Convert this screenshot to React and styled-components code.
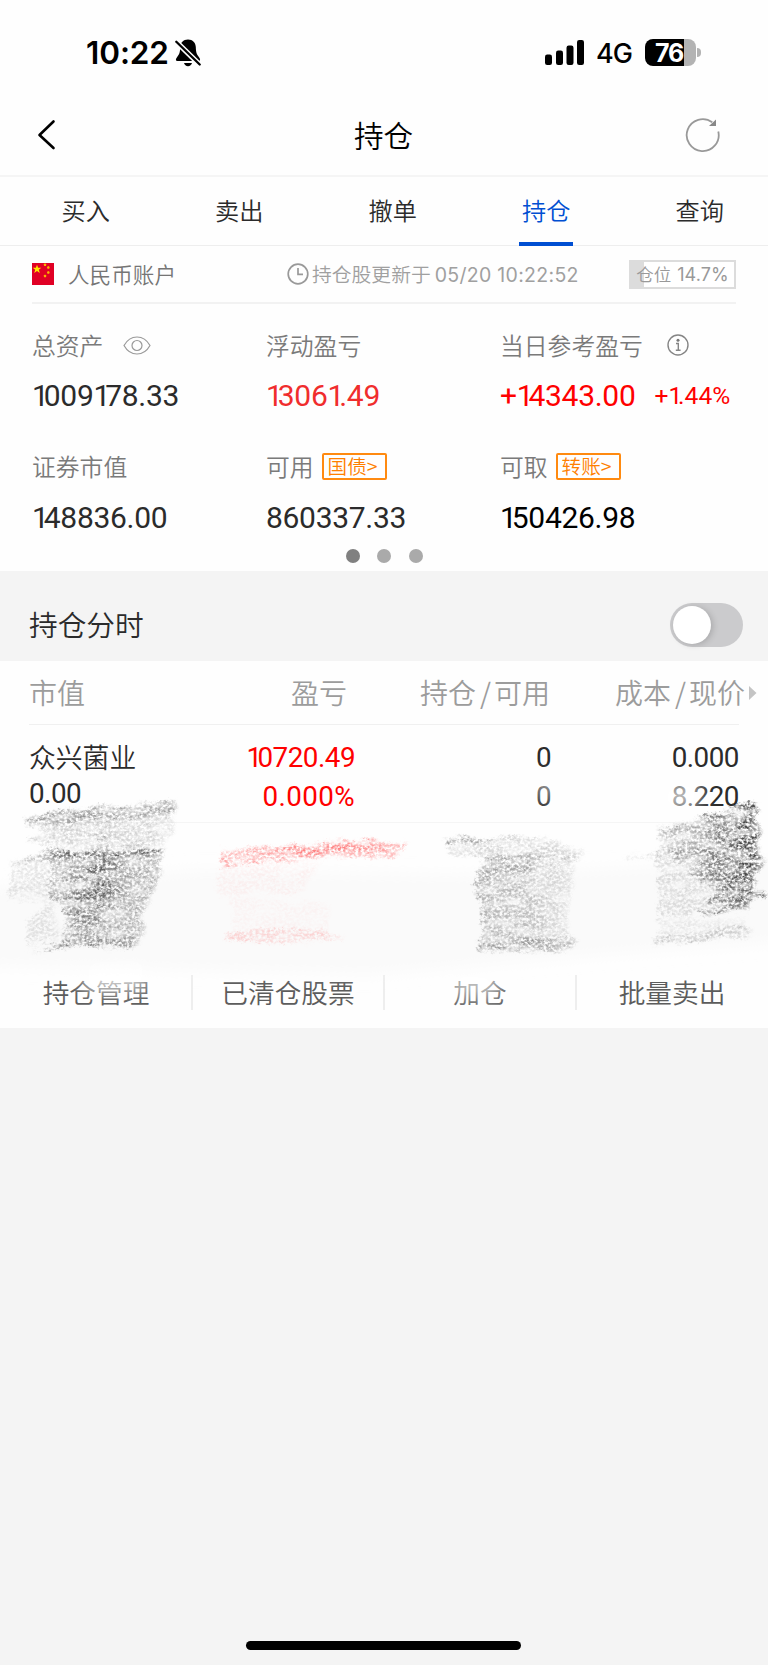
import React from "react";
import styled, { createGlobalStyle } from "styled-components";

const Global = createGlobalStyle`
  * { box-sizing: border-box; }
  body { margin: 0; background: #f4f4f4; }
`;

const cjk = `"Noto Sans CJK SC", sans-serif`;

const Screen = styled.div`
  width: 768px;
  height: 1665px;
  display: flex;
  flex-direction: column;
  background: #f4f4f4;
  font-family: ${cjk};
  font-weight: 350;
  color: #2b2b2b;
  overflow: hidden;
  white-space: nowrap;
`;

const StatusBar = styled.header`
  height: 96px;
  padding: 9px 67px 0 86px;
  display: flex;
  align-items: center;
  justify-content: space-between;
  background: #fefefe;
  font-family: Inter, sans-serif;
  color: #000;
`;
const StatusGroup = styled.div`
  display: flex;
  align-items: center;
`;
const Clock = styled.span`
  font-size: 31.5px;
  font-weight: 600;
  line-height: 36px;
  letter-spacing: -0.1px;
  margin-right: 6px;
`;
const Network = styled.span`
  font-size: 27px;
  font-weight: 500;
  line-height: 36px;
  letter-spacing: -1px;
  margin: 2px 13px 0 12px;
`;
const Battery = styled.div`
  width: 51px;
  height: 27px;
  border-radius: 8px;
  background: linear-gradient(90deg, #000 39px, #b3b3b3 39px);
  color: #fff;
  font-size: 25px;
  font-weight: 700;
  line-height: 28px;
  letter-spacing: -1.2px;
  padding-left: 10px;
`;
const BatteryTip = styled.i`
  width: 4px;
  height: 9px;
  margin-left: 1px;
  border-radius: 0 4px 4px 0;
  background: #b3b3b3;
`;

const NavBar = styled.nav`
  height: 81px;
  padding: 0 46px 2px 36px;
  display: grid;
  grid-template-columns: 38px 1fr 38px;
  align-items: center;
  background: #fefefe;
  border-bottom: 2px solid #f5f5f5;
`;
const Title = styled.h1`
  margin: 0 0 0 9px;
  text-align: center;
  font-size: 29.6px;
  font-weight: 350;
  line-height: 40px;
  color: #000;
`;

const Tabs = styled.div`
  height: 69px;
  padding-left: 9px;
  display: grid;
  grid-template-columns: repeat(5, 153.5px);
  justify-items: center;
  background: #fefefe;
  border-bottom: 1px solid #eee;
`;
const Tab = styled.div`
  width: 54px;
  height: 69px;
  display: flex;
  justify-content: center;
  font-size: 24.2px;
  line-height: 66px;
  color: ${(p) => (p.$active ? "#004fd2" : "#2b2b2b")};
  border-bottom: 4px solid ${(p) => (p.$active ? "#004fd2" : "transparent")};
`;

const Summary = styled.section`
  height: 325px;
  padding: 0 32px;
  background: #fefefe;
`;
const AccountRow = styled.div`
  height: 58px;
  display: flex;
  align-items: center;
  border-bottom: 2px solid #f2f2f2;
`;
const AccountName = styled.span`
  width: 233px;
  padding: 0 0 2px 14px;
  font-size: 21.6px;
  color: #757575;
`;
const Updated = styled.span`
  width: 320px;
  padding: 0 0 2px 3px;
  font-size: 19.8px;
  color: #a0a0a0;
`;
const Stamp = styled.span`
  margin-left: 4px;
  font-family: Inter, sans-serif;
  font-size: 19.5px;
  font-weight: 400;
  letter-spacing: 0.3px;
`;
const Ratio = styled.span`
  width: 107px;
  height: 29px;
  border: 2px solid #dcdcdc;
  background: linear-gradient(90deg, #dcdcdc 13px, #fff 13px);
  font-size: 17.5px;
  line-height: 24px;
  text-align: center;
  color: #999;
  em {
    font: 400 18px/24px Inter, sans-serif;
    letter-spacing: 0.1px;
    margin-left: 6px;
  }
`;

const Metrics = styled.div`
  display: grid;
  grid-template-columns: 234px 234px 1fr;
  grid-template-rows: 122px 110px;
`;
const Metric = styled.div`
  padding-top: ${(p) => (p.$second ? 19 : 20)}px;
`;
const MetricLabel = styled.div`
  height: 40px;
  display: flex;
  align-items: center;
  font-size: 23.8px;
  color: #7a7a7a;
  svg { margin: 2px 0 0 ${(p) => p.$gap || 0}px; }
`;
const MetricValue = styled.div`
  height: 40px;
  margin-top: ${(p) => (p.$second ? 12 : 11)}px;
  display: flex;
  align-items: center;
  font-family: Roboto, sans-serif;
  font-weight: 400;
  font-size: 30px;
  letter-spacing: -0.3px;
  color: ${(p) => p.$color || "#2b2b2b"};
`;
const Percent = styled.span`
  margin-left: 19px;
  font-size: 24.6px;
  letter-spacing: 0;
`;
const One = styled.span`
  letter-spacing: -0.17em;
`;
const Tag = styled.span`
  height: 27px;
  width: 65px;
  margin: 2px 0 0 8px;
  padding-left: 4px;
  border: 2px solid #ff8a10;
  border-radius: 2px;
  font-size: 19.6px;
  line-height: 21px;
  color: #ff7f00;
`;
const Dots = styled.div`
  display: flex;
  justify-content: center;
  gap: 17.5px;
  height: 14px;
  margin-top: 13px;
`;
const Dot = styled.i`
  width: 14px;
  height: 14px;
  border-radius: 50%;
  background: ${(p) => (p.$active ? "#808080" : "#aaa")};
`;

const ToggleRow = styled.section`
  height: 90px;
  padding: 18px 25px 0 29px;
  display: flex;
  align-items: center;
  justify-content: space-between;
  font-size: 28.7px;
`;
const ToggleLabel = styled.span`
  padding-bottom: 4px;
`;
const Switch = styled.div`
  width: 73px;
  height: 44px;
  padding: 3px;
  border-radius: 22px;
  background: #cbcbcd;
`;
const Knob = styled.div`
  width: 38px;
  height: 38px;
  border-radius: 50%;
  background: #fff;
  box-shadow: 2px 1px 6px rgba(0, 0, 0, 0.17);
`;

const Holdings = styled.section`
  position: relative;
  height: 367px;
  display: flex;
  flex-direction: column;
  background: #fefefe;
`;
const HeadRow = styled.div`
  height: 64px;
  margin: 0 29px;
  display: grid;
  grid-template-columns: 120px 198px 203px 195px;
  line-height: 60px;
  font-size: 28px;
  color: #9c9c9c;
  border-bottom: 1px solid #f0f0f0;
`;
const HeadCell = styled.div`
  position: relative;
  padding-bottom: 2px;
  display: flex;
  align-items: center;
  justify-content: ${(p) => (p.$left ? "flex-start" : "flex-end")};
  i { font-style: normal; margin: 0 3px 0 4px; }
`;
const More = styled.svg`
  position: absolute;
  right: -12px;
  top: 25px;
`;
const StockRow = styled.div`
  height: 98px;
  margin: 0 29px;
  padding-top: 14px;
  display: grid;
  grid-template-columns: 120px 206px 196px 188px;
  border-bottom: 1px solid #f5f5f5;
`;
const Cell = styled.div`
  display: flex;
  flex-direction: column;
  align-items: ${(p) => (p.$left ? "flex-start" : "flex-end")};
  gap: ${(p) => (p.$left ? 0 : 2)}px;
  font-family: Roboto, sans-serif;
  font-weight: 400;
  font-size: 27.8px;
  letter-spacing: -0.5px;
  line-height: 37px;
  color: ${(p) => p.$color || "#2b2b2b"};
`;
const StockName = styled.span`
  height: 36px;
  font-family: ${cjk};
  font-weight: 350;
  font-size: 26.8px;
  letter-spacing: 0;
  line-height: 35px;
`;
const Wide = styled.span`
  letter-spacing: 0.4px;
`;
const Actions = styled.div`
  height: 53px;
  margin-top: auto;
  padding-left: 1px;
  display: grid;
  grid-template-columns: repeat(4, 192px);
`;
const Action = styled.div`
  height: 35px;
  border-right: 2px solid ${(p) => (p.$last ? "transparent" : "#eee")};
  text-align: center;
  line-height: 33px;
  font-size: 26.7px;
  color: #5c5c5c;
`;
const Smudges = styled.svg`
  position: absolute;
  left: 0;
  top: 0;
  pointer-events: none;
`;
const HomeIndicator = styled.div`
  width: 275px;
  height: 9px;
  margin: auto auto 15px 246px;
  border-radius: 5px;
  background: #000;
`;

const Num = ({ children }) => (
  <span>
    {children.split(/(1)/).filter(Boolean).map((part, i) =>
      part === "1" ? <One key={i}>1</One> : part
    )}
  </span>
);

const BellOff = () => (
  <svg width="26" height="28" viewBox="0 0 26 28">
    <path d="M13 .5c-4.800 0-7.600 3.300-7.800 7.600C5 13.500 4.500 15 2 18.200.3 20.300.6 22 2.500 22h21c1.900 0 2.200-1.700.5-3.800-2.500-3.200-3-4.700-3.200-10.100C20.600 3.800 17.800.5 13 .5z" fill="#000" />
    <path d="M9 24h8c-.5 2-2 3.200-4 3.200S9.500 26 9 24z" fill="#000" />
    <path d="M0 1.500L26 27" stroke="#fefefe" strokeWidth="5.200" />
    <path d="M1.300 2.700L24.700 25.500" stroke="#000" strokeWidth="2.300" strokeLinecap="round" />
  </svg>
);

const Signal = () => (
  <svg width="39" height="26" viewBox="0 0 39 26">
    <rect x="0" y="14.500" width="7" height="10.500" rx="2.200" />
    <rect x="11" y="10.500" width="7" height="14.500" rx="2.200" />
    <rect x="21.500" y="5.500" width="7" height="19.500" rx="2.200" />
    <rect x="32" y="0" width="7" height="25" rx="2.200" />
  </svg>
);

const RefreshSvg = styled.svg`
  display: block;
`;
const Refresh = () => (
  <RefreshSvg width="38" height="38" viewBox="0 0 38 38" fill="none">
    <path d="M34.300 15.500A16 16 0 1 1 28.300 6.300" stroke="#999" strokeWidth="1.800" />
    <path d="M32 3.500V10H25z" fill="#888" />
  </RefreshSvg>
);

const Flag = () => (
  <svg width="22" height="22" viewBox="0 0 22 22">
    <rect width="22" height="22" fill="#e00024" />
    <path d="M5 1.800l1.100 3h3.200L6.800 6.700l1 3.200L5 8 2.200 9.900l1-3.200L.7 4.800h3.200z" fill="#ffe600" />
    <g fill="#f9b500">
      <path d="M13 .2l1.400 1-.5 1.700h-1.700l-.6-1.700z" />
      <path d="M16.300 3l1.400 1-.5 1.700h-1.700l-.6-1.700z" />
      <path d="M16.300 8l1.400 1-.5 1.700h-1.700l-.6-1.700z" />
      <path d="M13 11.500l1.400 1-.5 1.700h-1.700l-.6-1.700z" />
    </g>
  </svg>
);

const ClockIcon = () => (
  <svg width="22" height="22" viewBox="0 0 22 22" fill="none" stroke="#999" strokeWidth="1.700">
    <circle cx="11" cy="11" r="9.800" />
    <path d="M11 5v6.300h5" />
  </svg>
);

const Eye = () => (
  <svg width="28" height="19" viewBox="0 0 28 19" fill="none" stroke="#999" strokeWidth="1.200">
    <path d="M1 9.500C4.200 3.800 8.800 1 14 1s9.800 2.800 13 8.500C23.800 15.200 19.200 18 14 18S4.200 15.200 1 9.500z" />
    <circle cx="14" cy="9.500" r="5" />
  </svg>
);

const Info = () => (
  <svg width="22" height="22" viewBox="0 0 22 22" fill="none" stroke="#858585" strokeWidth="1.400">
    <circle cx="11" cy="11" r="10" />
    <circle cx="11" cy="6.300" r="1.500" fill="#777" stroke="none" />
    <path d="M9 9.500h2.300v6.500M8.800 16.200h4.800" />
  </svg>
);

const Scribbles = () => (
  <Smudges width="768" height="367" viewBox="0 661 768 367">
    <defs>
      <filter id="grain" filterUnits="userSpaceOnUse" x="0" y="740" width="768" height="260" colorInterpolationFilters="sRGB">
        <feTurbulence type="fractalNoise" baseFrequency="0.34 0.38" numOctaves="2" seed="11" result="n" />
        <feColorMatrix in="n" type="matrix" values="0 0 0 0 0  0 0 0 0 0  0 0 0 0 0  2.700 0 0 0 -0.820" result="dots" />
        <feTurbulence type="fractalNoise" baseFrequency="0.04 0.11" numOctaves="3" seed="4" result="n2" />
        <feColorMatrix in="n2" type="matrix" values="0 0 0 0 0  0 0 0 0 0  0 0 0 0 0  2 0 0 0 -0.200" result="patches" />
        <feGaussianBlur in="SourceGraphic" stdDeviation="1.800" result="soft" />
        <feDisplacementMap in="soft" in2="n2" scale="11" xChannelSelector="R" yChannelSelector="B" result="wavy" />
        <feDisplacementMap in="wavy" in2="n" scale="6" xChannelSelector="R" yChannelSelector="G" result="rough" />
        <feComposite in="rough" in2="dots" operator="in" result="speckled" />
        <feComposite in="speckled" in2="patches" operator="in" />
      </filter>
      <filter id="haze" filterUnits="userSpaceOnUse" x="-40" y="740" width="848" height="288">
        <feGaussianBlur stdDeviation="8" />
      </filter>
      <radialGradient id="core" gradientUnits="userSpaceOnUse" cx="0" cy="0" r="1" gradientTransform="translate(98 884) rotate(14) scale(36 66)">
        <stop offset="0" stopColor="#3c3c3c" stopOpacity=".9" />
        <stop offset="0.500" stopColor="#444" stopOpacity=".45" />
        <stop offset="1" stopColor="#444" stopOpacity="0" />
      </radialGradient>
      <linearGradient id="fadeLeft" gradientUnits="userSpaceOnUse" x1="655" y1="0" x2="745" y2="0">
        <stop offset="0" stopColor="#404040" stopOpacity=".22" />
        <stop offset="0.550" stopColor="#404040" stopOpacity=".45" />
        <stop offset="1" stopColor="#404040" stopOpacity=".95" />
      </linearGradient>
      <linearGradient id="fadeRight" gradientUnits="userSpaceOnUse" x1="447" y1="0" x2="550" y2="0">
        <stop offset="0" stopColor="#555" stopOpacity=".85" />
        <stop offset="1" stopColor="#555" stopOpacity=".1" />
      </linearGradient>
      <linearGradient id="block" gradientUnits="userSpaceOnUse" x1="478" y1="0" x2="576" y2="0">
        <stop offset="0" stopColor="#555" stopOpacity=".42" />
        <stop offset="0.500" stopColor="#555" stopOpacity=".38" />
        <stop offset="1" stopColor="#555" stopOpacity=".14" />
      </linearGradient>
    </defs>
    <g filter="url(#haze)">
      <path d="M-40 890L200 870 450 875 808 860V940L600 955 370 975 -40 965z" fill="#f6f6f6" opacity=".4" />
      <path d="M84 980L146 978" stroke="#fff" strokeWidth="26" opacity=".7" />
      <path d="M450 984L500 986" stroke="#fff" strokeWidth="28" opacity=".6" />
      <path d="M536 786L555 790" stroke="#fff" strokeWidth="24" opacity=".6" />
      <path d="M662 800L700 792" stroke="#fff" strokeWidth="26" opacity=".7" />
    </g>
    <g filter="url(#grain)">
      <g fill="#444">
        <path d="M24 819L46 817 50 812 175 801 177 812 125 818 50 823 26 825z" opacity=".5" />
        <path d="M44 820L172 812 174 832 160 846 100 850 30 842z" opacity=".24" />
        <path d="M10 864L50 850 162 848 164 856 60 860z" opacity=".4" />
        <path d="M52 850L163 849 160 878 142 915 146 930 136 944 62 944 64 910 50 898z" opacity=".42" />
        <path d="M60 851L162 849 162 855 62 857z" opacity=".5" />
        <path d="M52 850L164 850 150 948 60 948z" fill="url(#core)" />
        <path d="M12 868L56 860 54 915 62 940 28 945 28 920 46 905 10 895z" opacity=".14" />
        <path d="M28 952L70 941 138 942 130 948 70 946z" opacity=".55" />
        <path d="M94 838L106 835 106 840 97 843z" opacity=".8" />
      </g>
      <g fill="#ff3030">
        <path d="M222 849L260 849 374 839 378 843 406 842 406 850 392 855 290 860 224 868z" opacity=".42" />
        <path d="M265 849L376 840 388 848 290 856z" opacity=".32" />
        <path d="M218 870L320 862 300 895 216 895z" opacity=".06" />
        <path d="M225 936L260 930 320 930 345 938 290 943 228 941z" opacity=".2" />
        <path d="M230 895L330 905 330 935 235 932z" opacity=".04" />
      </g>
      <path d="M447 839L548 837 548 841 448 844z" fill="url(#fadeRight)" />
      <g fill="#505050">
        <path d="M447 845L560 843 584 852 580 860 480 856 450 855z" opacity=".24" />
        <path d="M483 857L574 855 574 880 566 920 574 945 480 948 484 910 474 885z" fill="url(#block)" />
        <path d="M484 858L530 854 534 874 486 876z" opacity=".2" />
        <path d="M478 944L520 942 524 939 577 939 574 945 552 952 480 950z" opacity=".45" />
      </g>
      <path d="M657 832L690 822 754 803 760 808 754 818 762 832 756 846 764 862 756 874 752 902 700 914 716 890 700 880 660 850z" fill="url(#fadeLeft)" />
      <g fill="#404040">
        <path d="M657 830L754 803 758 808 660 834z" opacity=".3" />
        <path d="M657 850L720 848 722 895 690 918 660 915z" opacity=".17" />
        <path d="M700 910L752 904 753 907 702 914z" opacity=".6" />
        <path d="M625 857L700 848 740 850 630 860z" opacity=".16" />
        <path d="M746 891L768 892 768 899 748 898z" opacity=".75" />
        <path d="M652 940L745 925 752 934 655 944z" opacity=".28" />
        <path d="M658 920L745 918 742 930 660 940z" opacity=".1" />
      </g>
    </g>
  </Smudges>
);

const tabs = ["买入", "卖出", "撤单", "持仓", "查询"];

export default function App() {
  return (
    <Screen>
      <Global />
      <StatusBar>
        <StatusGroup>
          <Clock>10:22</Clock>
          <BellOff />
        </StatusGroup>
        <StatusGroup>
          <Signal />
          <Network>4G</Network>
          <Battery>76</Battery>
          <BatteryTip />
        </StatusGroup>
      </StatusBar>
      <NavBar>
        <svg width="22" height="32" viewBox="0 0 22 32" fill="none" stroke="#000" strokeWidth="2.600" strokeLinecap="round" strokeLinejoin="round">
          <path d="M17.500 2.500L3.500 16 17.500 29" />
        </svg>
        <Title>持仓</Title>
        <Refresh />
      </NavBar>
      <Tabs>
        {tabs.map((t, i) => (
          <Tab key={t} $active={i === 3}>{t}</Tab>
        ))}
      </Tabs>
      <Summary>
        <AccountRow>
          <Flag />
          <AccountName>人民币账户</AccountName>
          <ClockIcon />
          <Updated>持仓股更新于<Stamp>05/20 10:22:52</Stamp></Updated>
          <Ratio>仓位<em>14.7%</em></Ratio>
        </AccountRow>
        <Metrics>
          <Metric>
            <MetricLabel $gap={20}>总资产<Eye /></MetricLabel>
            <MetricValue><Num>1009178.33</Num></MetricValue>
          </Metric>
          <Metric>
            <MetricLabel>浮动盈亏</MetricLabel>
            <MetricValue $color="#f02d2d"><Num>13061.49</Num></MetricValue>
          </Metric>
          <Metric>
            <MetricLabel $gap={24}>当日参考盈亏<Info /></MetricLabel>
            <MetricValue $color="#ff0000"><Num>+14343.00</Num><Percent><Num>+1.44%</Num></Percent></MetricValue>
          </Metric>
          <Metric $second>
            <MetricLabel>证券市值</MetricLabel>
            <MetricValue $second><Num>148836.00</Num></MetricValue>
          </Metric>
          <Metric $second>
            <MetricLabel>可用<Tag>国债&gt;</Tag></MetricLabel>
            <MetricValue $second><Num>860337.33</Num></MetricValue>
          </Metric>
          <Metric $second>
            <MetricLabel>可取<Tag>转账&gt;</Tag></MetricLabel>
            <MetricValue $second $color="#000"><Num>150426.98</Num></MetricValue>
          </Metric>
        </Metrics>
        <Dots><Dot $active /><Dot /><Dot /></Dots>
      </Summary>
      <ToggleRow>
        <ToggleLabel>持仓分时</ToggleLabel>
        <Switch><Knob /></Switch>
      </ToggleRow>
      <Holdings>
        <HeadRow>
          <HeadCell $left>市值</HeadCell>
          <HeadCell>盈亏</HeadCell>
          <HeadCell>持仓<i>/</i>可用</HeadCell>
          <HeadCell>
            成本<i>/</i>现价
            <More width="8" height="14" viewBox="0 0 8 14"><path d="M0 0L7.500 7 0 14z" fill="#c4c4c4" /></More>
          </HeadCell>
        </HeadRow>
        <StockRow>
          <Cell $left><StockName>众兴菌业</StockName><Num>0.00</Num></Cell>
          <Cell $color="#ff0000"><Num>10720.49</Num><Wide>0.000%</Wide></Cell>
          <Cell><Num>0</Num><Num>0</Num></Cell>
          <Cell><Num>0.000</Num><Num>8.220</Num></Cell>
        </StockRow>
        <Actions>
          <Action>持仓管理</Action>
          <Action>已清仓股票</Action>
          <Action>加仓</Action>
          <Action $last>批量卖出</Action>
        </Actions>
        <Scribbles />
      </Holdings>
      <HomeIndicator />
    </Screen>
  );
}
